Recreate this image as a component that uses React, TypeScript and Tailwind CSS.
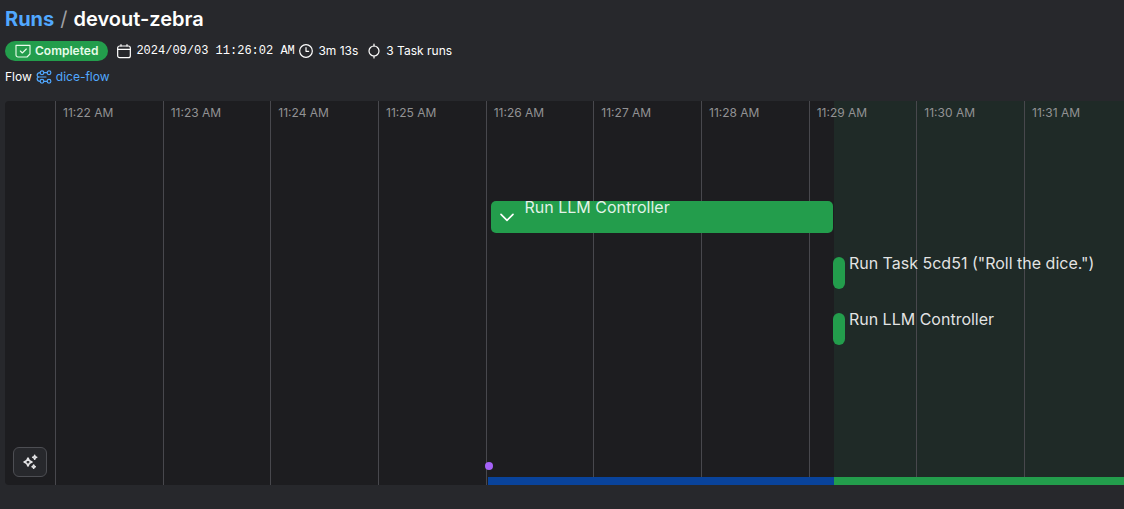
import React from "react";

const START = 21.5356;
const SPAN = 10.393;
const pos = (minute: number) => `${((minute - START) / SPAN) * 100}%`;
const len = (minutes: number) => `${(minutes / SPAN) * 100}%`;

const ticks = [22, 23, 24, 25, 26, 27, 28, 29, 30, 31];
const END = 29.235;

const icon = {
  viewBox: "0 0 24 24",
  fill: "none",
  stroke: "currentColor",
  strokeWidth: 1.8,
  strokeLinecap: "round",
  strokeLinejoin: "round",
  "aria-hidden": true,
} as const;

function StateIcon() {
  return (
    <svg {...icon} strokeWidth={1.7} className="h-4 w-4">
      <path d="M1.5 3.5h21v13l-4.500 4.500H4.500a3 3 0 0 1-3-3z" />
      <path d="m8 12 3 3 6-6" />
    </svg>
  );
}

function CalendarIcon() {
  return (
    <svg {...icon} className="h-4 w-4">
      <rect x="2.500" y="4.500" width="19" height="17.500" rx="3" />
      <path d="M2.500 9.500h19M7.500 2.500v2M16.500 2.500v2" />
    </svg>
  );
}

function ClockIcon() {
  return (
    <svg {...icon} className="h-4 w-4">
      <circle cx="12" cy="12" r="9.500" />
      <path d="M12 7v5.500h4" />
    </svg>
  );
}

function TaskIcon() {
  return (
    <svg {...icon} className="h-4 w-4">
      <circle cx="12" cy="12" r="7.500" />
      <path d="M12 1.500v3M12 19.500v3" />
    </svg>
  );
}

function FlowIcon() {
  return (
    <svg {...icon} className="h-4 w-4">
      <circle cx="9" cy="5.500" r="2.800" />
      <circle cx="19.500" cy="5.500" r="2.800" />
      <circle cx="9" cy="18.500" r="2.800" />
      <circle cx="19.500" cy="18.500" r="2.800" />
      <path d="M12 5.500h4.500M12 18.500h4.500M6 5.500C1 5.500 0 12 5 12h10M6 18.500C1 18.500 0 12 5 12" />
    </svg>
  );
}

function SparklesIcon() {
  return (
    <svg {...icon} strokeWidth={2.300} className="h-4 w-4">
      <path d="M9 6c.8 3.600 2.400 5.200 6 6-3.600.8-5.200 2.400-6 6-.8-3.600-2.400-5.200-6-6 3.600-.8 5.200-2.400 6-6z" />
      <path d="M19 2c.3 2 1 2.700 3 3-2 .3-2.700 1-3 3-.3-2-1-2.700-3-3 2-.3 2.700-1 3-3z" />
      <path d="M17.500 16.500c.3 1.700 1 2.300 2.500 2.500-1.500.3-2.200 1-2.500 2.500-.3-1.500-1-2.200-2.500-2.500 1.500-.2 2.200-.8 2.500-2.500z" />
    </svg>
  );
}

function RunLabel({ children }: { children: React.ReactNode }) {
  return <span className="text-base leading-3 whitespace-nowrap text-white/88">{children}</span>;
}

function ShortRun({ label }: { label: string }) {
  return (
    <div className="flex h-8 gap-1" style={{ marginLeft: pos(END - 0.01) }}>
      <div className="h-8 w-3 shrink-0 rounded-md bg-[#239d4c]" />
      <RunLabel>{label}</RunLabel>
    </div>
  );
}

export default function App() {
  return (
    <main className="min-h-screen overflow-hidden bg-[#27282c] pt-[6px] pl-[5px] font-['Inter',sans-serif] text-white">
      <h1 className="flex gap-[6px] text-xl leading-[27px] font-semibold">
        <a href="#runs" className="font-bold text-[#51a8ff]">Runs</a>
        <span className="font-normal text-[#a0a0a4]">/</span>
        <span>devout-zebra</span>
      </h1>

      <div className="mt-2 flex items-center gap-2 text-xs leading-5">
        <span className="flex h-5 items-center gap-1 rounded-full bg-[#239d4c] px-[10px] font-semibold text-[#e6fbe9]">
          <StateIcon />
          Completed
        </span>
        <span className="flex items-center gap-1">
          <CalendarIcon />
          <time className="w-[154px] font-['Liberation_Mono',monospace] whitespace-nowrap">2024/09/03 11:26:02 AM</time>
        </span>
        <span className="flex items-center gap-1">
          <ClockIcon />
          3m 13s
        </span>
        <span className="flex items-center gap-1">
          <TaskIcon />
          3 Task runs
        </span>
      </div>

      <div className="mt-2 flex items-center gap-1 text-xs leading-4">
        <span>Flow</span>
        <a href="#dice-flow" className="flex items-center gap-1 text-[#51a8ff]">
          <FlowIcon />
          dice-flow
        </a>
      </div>

      <section
        aria-label="Run timeline"
        className="relative mt-4 flex h-96 flex-col overflow-hidden rounded-l bg-[#1d1d20]"
      >
        <div className="absolute inset-y-0 right-0 bg-[#1f2a27]" style={{ left: pos(END) }} />
        {ticks.map((t) => (
          <div
            key={t}
            className="absolute inset-y-0 border-l border-[#48484d] pl-[7px] text-xs leading-6 whitespace-nowrap text-[#929294]"
            style={{ left: pos(t) }}
          >
            11:{t} AM
          </div>
        ))}

        <div className="relative flex flex-1 flex-col gap-6 pt-[100px]">
          <div
            className="flex h-8 gap-[10px] rounded-[5px] bg-[#239d4c] pl-2"
            style={{ marginLeft: pos(26.045), width: len(3.181) }}
          >
            <button type="button" aria-label="Collapse Run LLM Controller" className="h-8 w-4">
              <svg {...icon} strokeWidth={2.500} className="h-4 w-4">
                <path d="m3 8 9 9 9-9" />
              </svg>
            </button>
            <RunLabel>Run LLM Controller</RunLabel>
          </div>
          <ShortRun label={'Run Task 5cd51 ("Roll the dice.")'} />
          <ShortRun label="Run LLM Controller" />
        </div>

        <div className="relative flex items-end px-2 pb-2">
          <button
            type="button"
            aria-label="Recenter timeline"
            className="flex h-[30px] w-[34px] items-center justify-center rounded-md border border-[#4d4e53] bg-[#27282c] text-[#e4e4e6]"
          >
            <SparklesIcon />
          </button>
        </div>
        <div className="absolute bottom-[15px] h-2 w-2 rounded-full bg-[#a562f7]" style={{ left: pos(25.991) }} />
        <div className="absolute right-0 bottom-0 flex h-2" style={{ left: pos(26.022) }}>
          <div className="bg-[#09439b]" style={{ width: "54.4%" }} />
          <div className="flex-1 bg-[#239d4c]" />
        </div>
      </section>
    </main>
  );
}
